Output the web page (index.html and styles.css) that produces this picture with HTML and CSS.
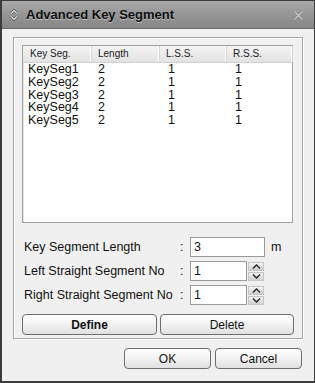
FILE: index.html
```html
<!DOCTYPE html>
<html lang="en">
<head>
    <meta charset="UTF-8">
    <title>Advanced Key Segment</title>
    <link rel="stylesheet" href="styles.css">
</head>
<body>
    <div class="window">
        <!-- Title bar -->
        <div class="titlebar">
            <svg class="title-icon" width="10" height="14" viewBox="0 0 10 14">
                <path d="M2 5.5 L5 2.5 L8 5.5" fill="none" stroke="#444" stroke-width="2.4"/>
                <path d="M2 8.5 L5 11.5 L8 8.5" fill="none" stroke="#444" stroke-width="2.4"/>
                <path d="M2 5.5 L5 2.5 L8 5.5" fill="none" stroke="#e8e8e8" stroke-width="1.2"/>
                <path d="M2 8.5 L5 11.5 L8 8.5" fill="none" stroke="#e8e8e8" stroke-width="1.2"/>
            </svg>
            <span class="title-text">Advanced Key Segment</span>
            <svg class="close-icon" width="11" height="11" viewBox="0 0 11 11">
                <path d="M1.5 1.5 L9.5 9.5 M9.5 1.5 L1.5 9.5" stroke="#6a6a6a" stroke-width="2.2"/>
                <path d="M1.5 1.5 L9.5 9.5 M9.5 1.5 L1.5 9.5" stroke="#d6d6d6" stroke-width="1.2"/>
            </svg>
        </div>

        <div class="content">
            <div class="group">
                <!-- List of segments -->
                <div class="list">
                    <div class="list-head">
                        <div class="col c1">Key Seg.</div>
                        <div class="col c2">Length</div>
                        <div class="col c3">L.S.S.</div>
                        <div class="col c4">R.S.S.</div>
                    </div>
                    <div class="list-body">
                        <div class="row"><span class="c1">KeySeg1</span><span class="c2">2</span><span class="c3">1</span><span class="c4">1</span></div>
                        <div class="row"><span class="c1">KeySeg2</span><span class="c2">2</span><span class="c3">1</span><span class="c4">1</span></div>
                        <div class="row"><span class="c1">KeySeg3</span><span class="c2">2</span><span class="c3">1</span><span class="c4">1</span></div>
                        <div class="row"><span class="c1">KeySeg4</span><span class="c2">2</span><span class="c3">1</span><span class="c4">1</span></div>
                        <div class="row"><span class="c1">KeySeg5</span><span class="c2">2</span><span class="c3">1</span><span class="c4">1</span></div>
                    </div>
                </div>

                <!-- Form fields -->
                <div class="form">
                    <div class="field">
                        <span class="label">Key Segment Length</span>
                        <span class="colon">:</span>
                        <div class="input wide">3</div>
                        <span class="unit">m</span>
                    </div>
                    <div class="field">
                        <span class="label">Left Straight Segment No</span>
                        <span class="colon">:</span>
                        <div class="input">1</div>
                        <div class="spin">
                            <div class="spin-btn"><svg width="9" height="5" viewBox="0 0 9 5"><path d="M1 4.5 L4.5 1 L8 4.5" fill="none" stroke="#222" stroke-width="1.3"/></svg></div>
                            <div class="spin-btn"><svg width="9" height="5" viewBox="0 0 9 5"><path d="M1 0.5 L4.5 4 L8 0.5" fill="none" stroke="#222" stroke-width="1.3"/></svg></div>
                        </div>
                    </div>
                    <div class="field">
                        <span class="label">Right Straight Segment No</span>
                        <span class="colon">:</span>
                        <div class="input">1</div>
                        <div class="spin">
                            <div class="spin-btn"><svg width="9" height="5" viewBox="0 0 9 5"><path d="M1 4.5 L4.5 1 L8 4.5" fill="none" stroke="#222" stroke-width="1.3"/></svg></div>
                            <div class="spin-btn"><svg width="9" height="5" viewBox="0 0 9 5"><path d="M1 0.5 L4.5 4 L8 0.5" fill="none" stroke="#222" stroke-width="1.3"/></svg></div>
                        </div>
                    </div>
                </div>

                <div class="group-buttons">
                    <button class="btn define">Define</button>
                    <button class="btn delete">Delete</button>
                </div>
            </div>

            <div class="footer">
                <button class="btn ok">OK</button>
                <button class="btn cancel">Cancel</button>
            </div>
        </div>
    </div>
</body>
</html>
```

FILE: styles.css
```css
/* Dialog */
body {
    margin: 0;
    font-family: "Liberation Sans", Arial, sans-serif;
    background: #f0f0f0;
}

.window {
    width: 315px;
    height: 383px;
    box-sizing: border-box;
    border: 1px solid #3c3c3c;
    border-left-width: 2px;
    border-bottom-width: 2px;
    background: #f0f0f0;
    display: flex;
    flex-direction: column;
}

.titlebar {
    height: 27px;
    flex-shrink: 0;
    display: flex;
    align-items: center;
    padding: 0 10px 0 7px;
    background: linear-gradient(#aaaaaa, #979797 45%, #868686);
    border-bottom: 1px solid #6a6a6a;
}

.title-icon {
    margin-right: 7px;
}

.title-text {
    flex: 1;
    font-size: 13px;
    font-weight: bold;
    color: #0e0e0e;
    text-shadow: 0 1px 0 #c0c0c0;
}

.close-icon {
    margin-top: 1px;
}

.content {
    padding: 8px 11px 0 11px;
}

/* Group box (etched) */
.group {
    height: 302px;
    border: 1px solid #a6a6a6;
    box-shadow: inset 1px 1px 0 #fff, 1px 1px 0 #fff;
    padding: 7px 8px 0 8px;
    box-sizing: border-box;
}

.list {
    height: 178px;
    box-sizing: border-box;
    border: 1px solid #a0a0a0;
    box-shadow: inset 1px 1px 0 #e4e4e4;
    background: #fff;
    margin-right: 1px;
}

.list-head {
    display: flex;
    height: 16px;
    background: linear-gradient(#f4f4f4, #e2e2e2);
    border-bottom: 1px solid #d0d0d0;
    font-size: 10px;
    color: #222;
    line-height: 16px;
}

.list-head .col {
    box-sizing: border-box;
    padding-left: 7px;
    border-right: 1px solid #fff;
    box-shadow: 1px 0 0 #d6d6d6;
}

.c1 { width: 68px; }
.c2 { width: 68px; }
.c3 { width: 67px; }
.c4 { flex: 1; }

.list-body {
    padding-top: 0;
}

.row {
    display: flex;
    height: 12.8px;
    line-height: 13px;
    font-size: 12.5px;
    color: #111;
}

.row span {
    box-sizing: border-box;
}

.row .c1 { padding-left: 5px; }
.row .c2 { padding-left: 7px; }
.row .c3 { padding-left: 9px; }
.row .c4 { padding-left: 9px; }

/* Form */
.form {
    padding: 14px 0 0 2px;
    display: flex;
    flex-direction: column;
    gap: 4px;
}

.field {
    display: flex;
    align-items: center;
    height: 20px;
    font-size: 12.5px;
    color: #111;
}

.label {
    width: 156px;
}

.colon {
    width: 10px;
}

.input {
    width: 57px;
    height: 20px;
    box-sizing: border-box;
    border: 1px solid #9a9a9a;
    background: #fff;
    padding-left: 3px;
    line-height: 18px;
}

.input.wide {
    width: 75px;
}

.unit {
    margin-left: 6px;
}

.spin {
    margin-left: 1px;
    display: flex;
    flex-direction: column;
    gap: 1px;
}

.spin-btn {
    width: 16px;
    height: 9px;
    box-sizing: border-box;
    border: 1px solid #c6c6c6;
    background: linear-gradient(#f4f4f4, #cfcfcf);
    display: flex;
    align-items: center;
    justify-content: center;
}

/* Buttons */
.btn {
    font-family: "Liberation Sans", Arial, sans-serif;
    font-size: 12px;
    color: #111;
    height: 21px;
    border: 1px solid #6e6e6e;
    border-radius: 4px;
    background: linear-gradient(#ffffff, #f2f2f2 50%, #e0e0e0);
    padding: 0;
    margin: 0;
}

.group-buttons {
    display: flex;
    gap: 3px;
    padding-top: 9px;
}

.define {
    width: 135px;
    font-weight: bold;
}

.delete {
    width: 134px;
}

.footer {
    display: flex;
    justify-content: flex-end;
    gap: 4px;
    padding: 9px 1px 0 0;
}

.ok, .cancel {
    width: 87px;
}
```
